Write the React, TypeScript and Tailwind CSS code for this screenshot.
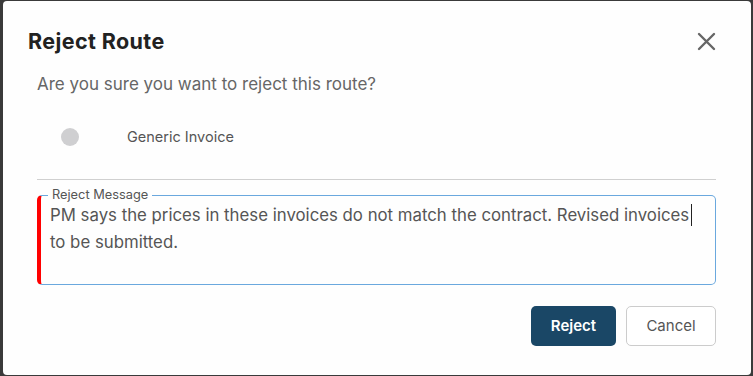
import React from "react";

export default function App() {
  return (
    <div className="h-[376px] w-[753px] bg-[#3a3a3a] pt-px pl-[3px] pr-[2px] pb-px font-['Inter',sans-serif]">
      <div className="h-[374px] w-[748px] bg-[#fefefe] rounded-[4px] flex flex-col">
        <div className="flex items-center justify-between pl-[25px] pr-[35px] mt-[26px] h-[28px]">
          <h2 className="text-[21.5px] leading-[28px] font-bold tracking-[0.4px] text-[#222]">Reject Route</h2>
          <button className="w-[19px] h-[19px] flex items-center justify-center text-[#666]">
            <svg width="19" height="19" viewBox="0 0 19 19" fill="none" stroke="currentColor" strokeWidth="2.4" strokeLinecap="round">
              <path d="M2 2 L17 17 M17 2 L2 17" />
            </svg>
          </button>
        </div>
        <p className="ml-[34px] mt-[17px] text-[17px] leading-[24px] text-[#666]">
          Are you sure you want to reject this route?
        </p>
        <div className="ml-[58px] mt-[29px] h-[24px] flex items-center">
          <span className="w-[18px] h-[18px] rounded-full bg-[#cfcfd1]" />
          <span className="ml-[48px] text-[14.5px] leading-[24px] text-[#555]">Generic Invoice</span>
        </div>
        <div className="ml-[34px] mr-[35px] mt-[30px] h-px bg-[#d0d0d0]" />
        <fieldset className="ml-[34px] mr-[35px] mt-[7px] h-[98px] border border-[#6aa8de] border-l-[4px] border-l-[#ff0000] rounded-[5px] pl-[7px]">
          <legend className="px-[4px] text-[12.8px] leading-[16px] text-[#555]">Reject Message</legend>
          <div className="pl-[2px] -mt-[1px] text-[16.8px] leading-[27px] text-[#555]">
            <div className="relative inline-block whitespace-nowrap">
              PM says the prices in these invoices do not match the contract. Revised invoices
              <span className="absolute -right-[3px] top-[2px] w-px h-[22px] bg-[#222]" />
            </div>
            <div>to be submitted.</div>
          </div>
        </fieldset>
        <div className="flex justify-end gap-[10px] mr-[35px] mt-[21px]">
          <button className="w-[85px] h-[40px] rounded-[5px] bg-[#1a4766] text-white text-[15px] font-semibold">
            Reject
          </button>
          <button className="w-[90px] h-[40px] rounded-[5px] border border-[#cccccc] bg-white text-[#555] text-[15px]">
            Cancel
          </button>
        </div>
      </div>
    </div>
  );
}
